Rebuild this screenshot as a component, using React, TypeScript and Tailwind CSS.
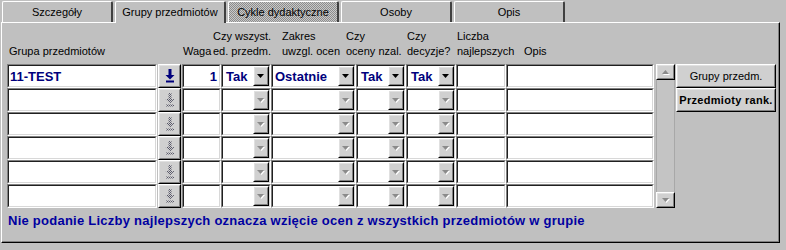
import React from "react";

const raisedOuter = "border border-t-white border-l-white border-b-black border-r-black";
const raisedInner = "border border-t-[#e0e0e0] border-l-[#e0e0e0] border-b-[#808080] border-r-[#808080] bg-[#d0d0d0]";

function Sunken({ w, children, className = "" }: { w: string; children?: React.ReactNode; className?: string }) {
  return (
    <div className={`${w} h-[24px] shrink-0 border border-t-[#808080] border-l-[#808080] border-b-white border-r-white`}>
      <div className={`h-full w-full border border-t-[#202020] border-l-[#202020] border-b-[#d8d8d8] border-r-[#d8d8d8] bg-white flex items-center ${className}`}>
        {children}
      </div>
    </div>
  );
}

function Tri({ dir = "down", enabled }: { dir?: "down" | "up"; enabled: boolean }) {
  const pts = dir === "down" ? "0,0 7,0 3.5,4" : "0,4 7,4 3.5,0";
  return (
    <svg width="8" height="5" viewBox="0 0 8 5" className="block">
      {!enabled && <polygon points={pts} fill="#ffffff" transform="translate(1,1)" />}
      <polygon points={pts} fill={enabled ? "#000000" : "#8a8a8a"} />
    </svg>
  );
}

function DropBtn({ enabled }: { enabled: boolean }) {
  return (
    <div className={`w-[16px] h-full shrink-0 ${raisedOuter}`}>
      <div className={`h-full w-full ${raisedInner} flex items-center justify-center`}>
        <Tri enabled={enabled} />
      </div>
    </div>
  );
}

function Combo({ w, text, enabled, pl = "pl-[3px]" }: { w: string; text?: string; enabled: boolean; pl?: string }) {
  return (
    <Sunken w={w} className="justify-between">
      <span className={`${pl} text-[13px] font-bold text-[#00007c] leading-none`}>{text}</span>
      <DropBtn enabled={enabled} />
    </Sunken>
  );
}

function InsertIcon({ enabled }: { enabled: boolean }) {
  return (
    <svg width="10" height="14" viewBox="0 0 10 14" className="block">
      <defs>
        <pattern id="dith" width="2" height="2" patternUnits="userSpaceOnUse">
          <rect x="0" y="0" width="1" height="1" fill="#5a5a6a" />
          <rect x="1" y="1" width="1" height="1" fill="#5a5a6a" />
        </pattern>
      </defs>
      <g fill={enabled ? "#00007c" : "url(#dith)"}>
        <rect x="3.5" y="0" width="3" height="6" />
        <polygon points="0.5,6 9.5,6 5,10.5" />
        <rect x="1" y="11.5" width="8" height="2" />
      </g>
    </svg>
  );
}

function InsertBtn({ enabled }: { enabled: boolean }) {
  return (
    <div className={`w-[23px] h-[24px] shrink-0 ${raisedOuter}`}>
      <div className={`h-full w-full ${raisedInner} flex items-center justify-center`}>
        <InsertIcon enabled={enabled} />
      </div>
    </div>
  );
}

function Row({ first }: { first: boolean }) {
  return (
    <div className="flex h-[24px]">
      <Sunken w="w-[150px]" className="pl-[1px]">
        {first && <span className="text-[13px] font-bold text-[#00007c] leading-none">11-TEST</span>}
      </Sunken>
      <div className="w-[1px] shrink-0" />
      <InsertBtn enabled={first} />
      <div className="w-[1px] shrink-0" />
      <Sunken w="w-[39px]" className="justify-end pr-[2px]">
        {first && <span className="text-[13px] font-bold text-[#00007c] leading-none">1</span>}
      </Sunken>
      <Combo w="w-[50px]" text={first ? "Tak" : ""} enabled={first} />
      <Combo w="w-[85px]" text={first ? "Ostatnie" : ""} enabled={first} pl="pl-[2px]" />
      <Combo w="w-[50px]" text={first ? "Tak" : ""} enabled={first} />
      <Combo w="w-[50px]" text={first ? "Tak" : ""} enabled={first} />
      <Sunken w="w-[50px]" />
      <Sunken w="w-[148px]" />
    </div>
  );
}

function Tab({ label, active, dithered }: { label: string; active?: boolean; dithered?: boolean }) {
  return (
    <div
      className={`w-[111px] shrink-0 rounded-t-[2px] border-t border-l border-t-white border-l-white border-r-2 border-r-[#404040] flex items-center justify-center ${
        active ? "h-[22px] -mb-[1px] relative z-10 bg-[#c0c0c0]" : "h-[21px]"
      } ${dithered ? "bg-[repeating-conic-gradient(#8c8c8c_0%_25%,#c8c8c8_0%_50%)] bg-[length:2px_2px]" : "bg-[#c0c0c0]"}`}
    >
      <span className="leading-none">{label}</span>
    </div>
  );
}

function HeadLabel({ w, l1, l2, align = "left" }: { w: string; l1?: string; l2: string; align?: string }) {
  return (
    <div className={`${w} shrink-0 h-[30px] flex flex-col justify-end leading-[15px] whitespace-nowrap ${align === "right" ? "text-right" : ""}`}>
      {l1 && <div>{l1}</div>}
      <div>{l2}</div>
    </div>
  );
}

function BigButton({ label, bold }: { label: string; bold?: boolean }) {
  return (
    <div className={`w-[100px] h-[24px] ${raisedOuter}`}>
      <div className={`h-full w-full ${raisedInner} flex items-center justify-center`}>
        <span className={`leading-none ${bold ? "font-bold tracking-[0.3px]" : ""}`}>{label}</span>
      </div>
    </div>
  );
}

export default function App() {
  const rows = [true, false, false, false, false, false];
  return (
    <div className="w-[786px] h-[250px] bg-[#c0c0c0] overflow-hidden font-['Liberation_Sans',Arial,sans-serif] text-[11px] text-black">
      <div className="flex items-end gap-[2px] pl-[2px] h-[22px]">
        <Tab label="Szczegóły" />
        <Tab label="Grupy przedmiotów" active />
        <Tab label="Cykle dydaktyczne" dithered />
        <Tab label="Osoby" />
        <Tab label="Opis" />
      </div>
      <div className="ml-[1px] w-[779px] h-[221px] border-t border-l border-t-white border-l-white border-r border-b border-r-black border-b-black">
        <div className="w-full h-full border-r border-b border-r-[#808080] border-b-[#808080] flex flex-col">
          <div className="mt-[6px] pl-[7px] flex">
            <HeadLabel w="w-[174px]" l2="Grupa przedmiotów" />
            <HeadLabel w="w-[30px]" l2="Waga" />
            <HeadLabel w="w-[69px]" l1="Czy wszyst." l2="ed. przedm." />
            <HeadLabel w="w-[64px]" l1="Zakres" l2="uwzgl. ocen" />
            <HeadLabel w="w-[61px]" l1="Czy" l2="oceny nzal." />
            <HeadLabel w="w-[50px]" l1="Czy" l2="decyzje?" />
            <HeadLabel w="w-[67px]" l1="Liczba" l2="najlepszych" />
            <HeadLabel w="w-[60px]" l2="Opis" />
          </div>
          <div className="mt-[5px] pl-[5px] flex">
            <div className="flex flex-col">
              {rows.map((f, i) => (
                <Row key={i} first={f} />
              ))}
            </div>
            <div className="ml-[2px] w-[19px] h-[144px] flex flex-col bg-[#c4c4c4] border-x border-x-[#a8a8a8]">
              <div className={`h-[16px] ${raisedOuter} -mx-[1px]`}>
                <div className={`h-full w-full ${raisedInner} flex items-center justify-center`}>
                  <Tri dir="up" enabled={false} />
                </div>
              </div>
              <div className="flex-1" />
              <div className={`h-[16px] ${raisedOuter} -mx-[1px]`}>
                <div className={`h-full w-full ${raisedInner} flex items-center justify-center`}>
                  <Tri dir="down" enabled={false} />
                </div>
              </div>
            </div>
            <div className="ml-[1px] flex flex-col">
              <BigButton label="Grupy przedm." />
              <BigButton label="Przedmioty rank." bold />
            </div>
          </div>
          <div className="mt-[5px] pl-[6px] text-[13px] leading-[16px] font-bold tracking-[0.25px] text-[#0000a0] whitespace-nowrap">
            Nie podanie Liczby najlepszych oznacza wzięcie ocen z wszystkich przedmiotów w grupie
          </div>
        </div>
      </div>
    </div>
  );
}
